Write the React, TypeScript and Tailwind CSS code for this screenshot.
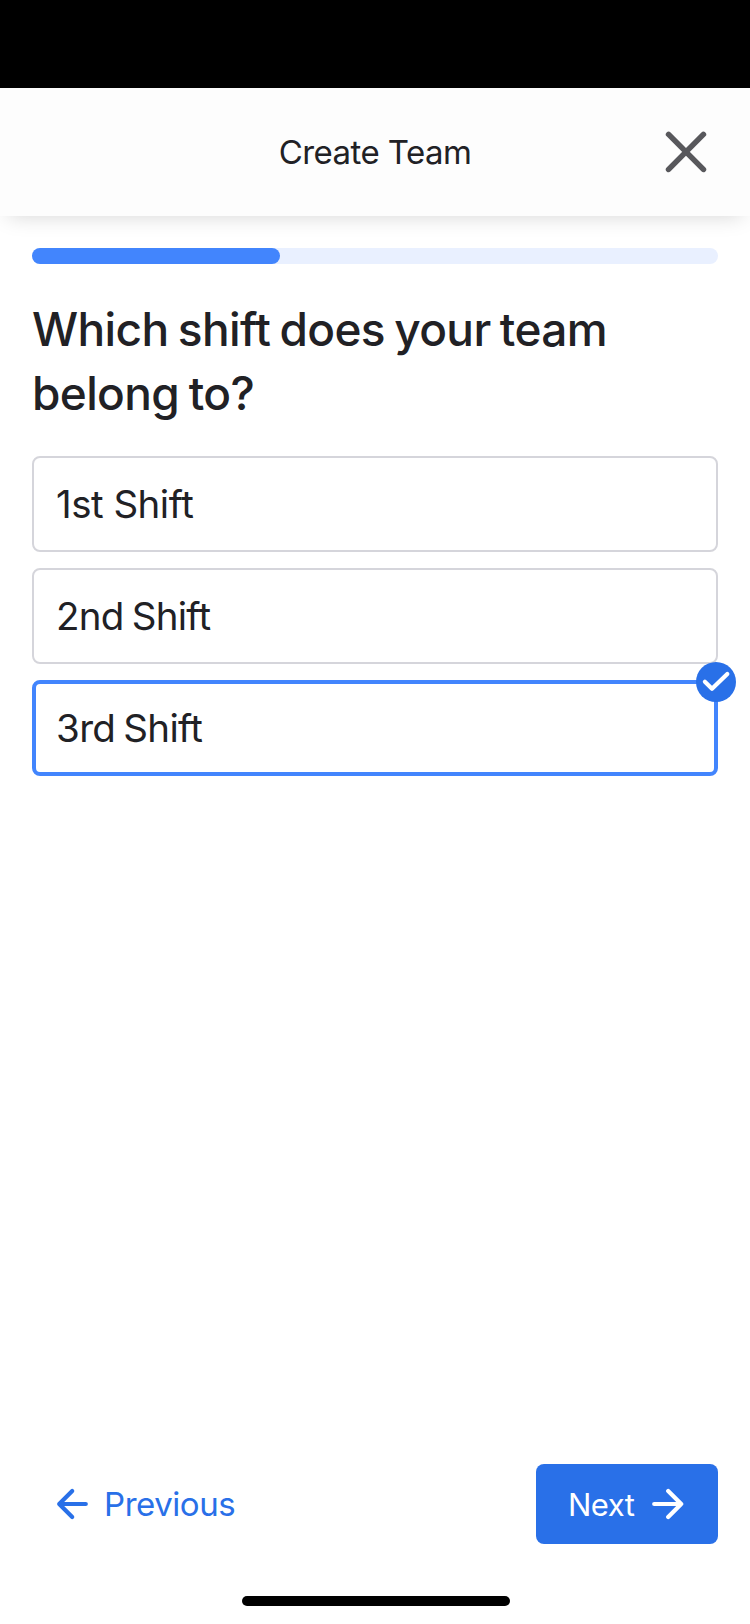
import React, { useState } from "react";

const options = [
  { label: "1st Shift", tracking: "tracking-[-0.5px]" },
  { label: "2nd Shift", tracking: "tracking-[-0.7px] [word-spacing:-2.2px]" },
  { label: "3rd Shift", tracking: "tracking-[-0.65px] [word-spacing:-2.2px]" },
];

function Header() {
  return (
    <header className="grid h-32 shrink-0 grid-cols-[1fr_auto_1fr] items-center bg-[#fdfdfd] shadow-[0_8px_20px_-8px_rgba(0,0,0,0.17)]">
      <span />
      <h1 className="text-[33px] leading-10 tracking-[-0.55px]">Create Team</h1>
      <button aria-label="Close" className="mr-10 size-12 justify-self-end">
        <svg viewBox="0 0 48 48" className="size-12" fill="none" stroke="#58585c" strokeWidth="5.6" strokeLinecap="round">
          <path d="M6.6 6.4 41.4 41.4M41.4 6.4 6.6 41.4" />
        </svg>
      </button>
    </header>
  );
}

function CheckBadge() {
  return (
    <svg viewBox="0 0 40 40" className="absolute -top-[22px] -right-[22px] size-10" fill="none">
      <circle cx="20" cy="20" r="20" fill="#2970e8" />
      <path d="M8.9 19.8 16 26.8 31.3 11.9" stroke="#fff" strokeWidth="4.2" strokeLinecap="round" strokeLinejoin="round" />
    </svg>
  );
}

export default function App() {
  const [selected, setSelected] = useState(2);

  return (
    <div className="flex h-[1624px] w-[750px] flex-col overflow-hidden bg-white font-['Inter',sans-serif] text-[#212125]">
      <div className="h-[88px] shrink-0 bg-black" />
      <Header />
      <main className="flex flex-1 flex-col px-8 pt-8">
        <div className="h-4 rounded-full bg-[#e9f0ff]">
          <div className="h-4 w-[248px] rounded-full bg-[#4285fd]" />
        </div>
        <h2 className="mt-[33px] text-[46px] leading-16 font-medium">
          <span className="block tracking-[-0.6px] [word-spacing:-2.5px]">Which shift does your team</span>
          <span className="block tracking-[-0.65px] [word-spacing:-2px]">belong to?</span>
        </h2>
        <div className="mt-[31px] flex flex-col gap-4">
          {options.map((option, i) => (
            <button
              key={option.label}
              onClick={() => setSelected(i)}
              className={`relative flex h-24 items-center rounded-lg text-left text-[38.5px] leading-12 ${option.tracking} ${
                i === selected ? "border-4 border-[#4285fd] px-5" : "border-2 border-[#d5d5db] px-[22px]"
              }`}
            >
              {option.label}
              {i === selected && <CheckBadge />}
            </button>
          ))}
        </div>
      </main>
      <footer className="flex shrink-0 flex-col items-center px-8 pb-[18px]">
        <div className="flex w-full items-center justify-between">
          <button className="flex h-20 items-center gap-4 pl-6 text-[33px] leading-10 tracking-[-0.45px] text-[#2970e8]">
            <svg viewBox="0 0 32 32" className="size-8" fill="none" stroke="currentColor" strokeWidth="4.2" strokeLinecap="round" strokeLinejoin="round">
              <path d="M29.8 16H3.2M16.2 3 3.2 16l13 13" />
            </svg>
            Previous
          </button>
          <button className="flex h-20 w-[182px] items-center justify-between rounded-lg bg-[#2970e8] pr-[34px] pl-8 text-[31px] leading-10 tracking-[-0.5px] text-white">
            <span className="pt-0.5">Next</span>
            <svg viewBox="0 0 32 32" className="size-8" fill="none" stroke="currentColor" strokeWidth="4.2" strokeLinecap="round" strokeLinejoin="round">
              <path d="M2.2 16h27M16.2 3l13 13-13 13" />
            </svg>
          </button>
        </div>
        <div className="mt-[52px] ml-0.5 h-2.5 w-[268px] rounded-full bg-black" />
      </footer>
    </div>
  );
}
